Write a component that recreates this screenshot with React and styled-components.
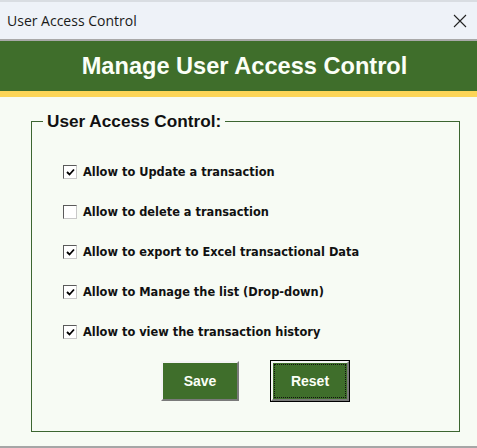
import React, { useState } from "react";
import styled, { createGlobalStyle } from "styled-components";

const items = [
  { id: "update", label: "Allow to Update a transaction", checked: true },
  { id: "delete", label: "Allow to delete a transaction", checked: false },
  { id: "export", label: "Allow to export to Excel transactional Data", checked: true },
  { id: "list", label: "Allow to Manage the list (Drop-down)", checked: true },
  { id: "history", label: "Allow to view the transaction history", checked: true },
];

const App = () => {
  const [perms, setPerms] = useState(
    Object.fromEntries(items.map((i) => [i.id, i.checked]))
  );

  const toggle = (id) => setPerms({ ...perms, [id]: !perms[id] });
  const reset = () =>
    setPerms(Object.fromEntries(items.map((i) => [i.id, i.checked])));

  return (
    <Window>
      <GlobalStyle />
      <BehindStrip />
      <TitleBar>
        <span>User Access Control</span>
        <CloseBtn aria-label="close">
          <svg width="14" height="14" viewBox="0 0 14 14">
            <path d="M1 1 L13 13 M13 1 L1 13" stroke="#222" strokeWidth="1.1" />
          </svg>
        </CloseBtn>
      </TitleBar>
      <Header>Manage User Access Control</Header>
      <Body>
        <Frame>
          <Legend>User Access Control:</Legend>
          <List>
            {items.map((item) => (
              <Row key={item.id} onClick={() => toggle(item.id)}>
                <Box>
                  {perms[item.id] && (
                    <svg width="9" height="9" viewBox="0 0 9 9">
                      <path d="M1 4 L3.5 6.5 L8 1.5" fill="none" stroke="#000" strokeWidth="1.8" />
                    </svg>
                  )}
                </Box>
                <Label>{item.label}</Label>
              </Row>
            ))}
          </List>
          <Buttons>
            <Button>Save</Button>
            <Button focused onClick={reset}>
              Reset
            </Button>
          </Buttons>
        </Frame>
      </Body>
    </Window>
  );
};

export default App;

// -------------------- Styles --------------------
const GlobalStyle = createGlobalStyle`
  body {
    margin: 0;
    background: #f7fbf4;
    font-family: "Liberation Sans", Arial, sans-serif;
  }
`;

const Window = styled.div`
  width: 477px;
  height: 448px;
  display: flex;
  flex-direction: column;
  background: #f7fbf4;
  border-bottom: 2px solid #a6a6a6;
  box-sizing: border-box;
`;

const BehindStrip = styled.div`
  height: 2px;
  background: #d9dde2;
`;

const TitleBar = styled.div`
  height: 37px;
  display: flex;
  align-items: center;
  justify-content: space-between;
  padding: 0 10px 0 7px;
  background: #eef2f8;
  border-bottom: 2px solid #a9a9a9;
  font-family: "Open Sans", "Noto Sans", sans-serif;
  font-size: 14px;
  color: #1a1a1a;
`;

const CloseBtn = styled.div`
  display: flex;
  align-items: center;
`;

const Header = styled.div`
  height: 50px;
  display: flex;
  align-items: center;
  justify-content: center;
  padding-left: 12px;
  background: #3f6e2b;
  border-bottom: 6px solid #fcd557;
  color: #fbfff7;
  font-family: "Liberation Sans", Arial, sans-serif;
  font-weight: bold;
  font-size: 23.6px;
`;

const Body = styled.div`
  flex: 1;
  padding: 14px 17px 14px 31px;
`;

const Frame = styled.fieldset`
  margin: 0;
  height: 100%;
  box-sizing: border-box;
  border: 1px solid #3c6530;
  padding: 0;
  display: flex;
  flex-direction: column;
`;

const Legend = styled.legend`
  margin-left: 11px;
  padding: 0 4px;
  font-family: "Liberation Sans", Arial, sans-serif;
  font-weight: bold;
  font-size: 17.2px;
  color: #111;
`;

const List = styled.div`
  display: flex;
  flex-direction: column;
  gap: 24px;
  margin-top: 32px;
  padding-left: 31px;
`;

const Row = styled.div`
  display: flex;
  align-items: center;
  gap: 6px;
  height: 16px;
  cursor: pointer;
`;

const Box = styled.span`
  width: 12px;
  height: 12px;
  display: flex;
  align-items: center;
  justify-content: center;
  background: #fff;
  border: 1px solid #5a5a5a;
  border-right-color: #c8c8c8;
  border-bottom-color: #c8c8c8;
`;

const Label = styled.span`
  font-family: "DejaVu Sans", "Liberation Sans", sans-serif;
  font-weight: bold;
  font-size: 11.4px;
  color: #111;
`;

const Buttons = styled.div`
  display: flex;
  justify-content: center;
  gap: 32px;
  margin-top: 21px;
  padding-left: 19px;
`;

const Button = styled.button`
  position: relative;
  width: 78px;
  height: 40px;
  background: #3f6e2b;
  color: #fbfff7;
  font-family: "Liberation Sans", Arial, sans-serif;
  font-weight: bold;
  font-size: 14px;
  border: 2px solid;
  border-color: #f4f4f4 #7a7a7a #7a7a7a #f4f4f4;
  outline: ${({ focused }) => (focused ? "1px solid #000" : "none")};
  outline-offset: 0;
  cursor: pointer;

  &::after {
    content: "";
    display: ${({ focused }) => (focused ? "block" : "none")};
    position: absolute;
    inset: 1px;
    border: 1px dotted #111;
  }
`;
